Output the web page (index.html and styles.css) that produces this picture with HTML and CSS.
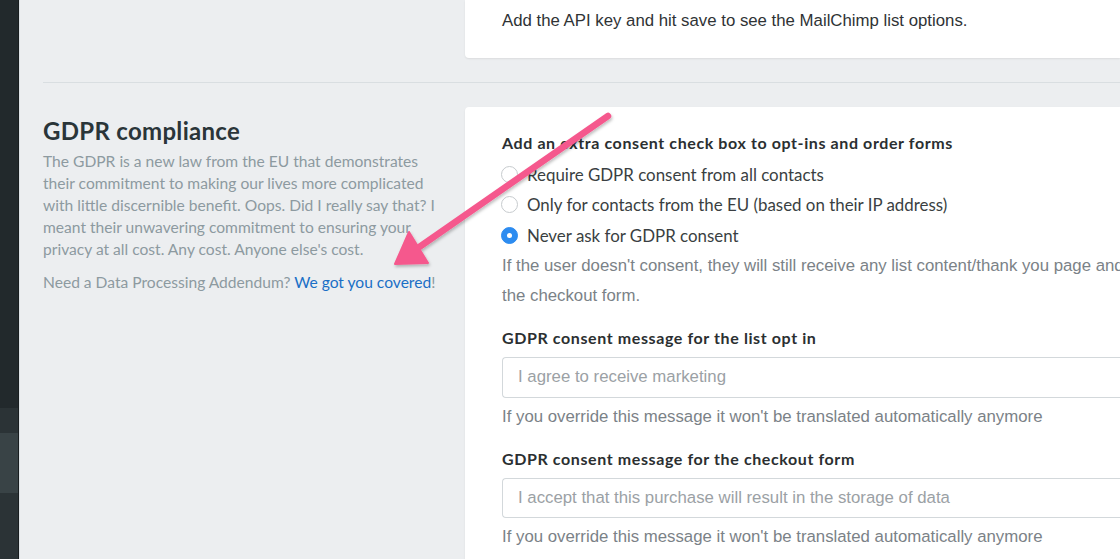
FILE: index.html
```html
<!DOCTYPE html>
<html>
<head>
<meta charset="utf-8">
<link rel="stylesheet" href="styles.css">
</head>
<body>
<div class="app">
  <aside class="sidebar">
    <div class="sb-top"></div>
    <div class="sb-item"></div>
    <div class="sb-item sb-active"></div>
    <div class="sb-rest"></div>
  </aside>
  <main class="main">
    <section class="row row-top">
      <div class="side"></div>
      <div class="card card-top">
        <p class="plain">Add the API key and hit save to see the MailChimp list options.</p>
      </div>
    </section>
    <hr class="divider">
    <section class="row">
      <div class="side side-text">
        <h2 class="title">GDPR compliance</h2>
        <p class="desc">The GDPR is a new law from the EU that demonstrates their commitment to making our lives more complicated with little discernible benefit. Oops. Did I really say that? I meant their unwavering commitment to ensuring your privacy at all cost. Any cost. Anyone else's cost.</p>
        <p class="desc desc-link">Need a Data Processing Addendum? <a class="link" href="#">We got you covered</a>!</p>
      </div>
      <div class="card card-form">
        <div class="label">Add an extra consent check box to opt-ins and order forms</div>
        <div class="radios">
          <label class="radio"><span class="dot"></span>Require GDPR consent from all contacts</label>
          <label class="radio"><span class="dot"></span>Only for contacts from the EU (based on their IP address)</label>
          <label class="radio"><span class="dot dot-on"></span>Never ask for GDPR consent</label>
        </div>
        <p class="help help-wide">If the user doesn't consent, they will still receive any list content/thank you page and the checkout form.</p>
        <div class="field">
          <div class="label">GDPR consent message for the list opt in</div>
          <div class="input">I agree to receive marketing</div>
          <p class="help">If you override this message it won't be translated automatically anymore</p>
        </div>
        <div class="field">
          <div class="label">GDPR consent message for the checkout form</div>
          <div class="input input-short">I accept that this purchase will result in the storage of data</div>
          <p class="help">If you override this message it won't be translated automatically anymore</p>
        </div>
      </div>
    </section>
  </main>
</div>
<svg class="arrow" width="1120" height="559" viewBox="0 0 1120 559">
  <defs>
    <filter id="sh" x="-20%" y="-20%" width="140%" height="140%">
      <feDropShadow dx="1" dy="2" stdDeviation="1.5" flood-color="#000" flood-opacity="0.25"/>
    </filter>
  </defs>
  <g filter="url(#sh)" fill="#f5598d" stroke="#f5598d">
    <line x1="608" y1="116" x2="415" y2="250" stroke-width="6.5" stroke-linecap="round"/>
    <polygon points="395,264 409,232 428,263" stroke-width="2" stroke-linejoin="round"/>
  </g>
</svg>
</body>
</html>
```
FILE: styles.css
```css
* { box-sizing: border-box; }
html, body { margin: 0; padding: 0; }
body {
  width: 1120px;
  height: 559px;
  overflow: hidden;
  background: #eceef0;
  font-family: "Lato", "Liberation Sans", sans-serif;
  position: relative;
}
.app {
  display: flex;
  height: 559px;
}
.sidebar {
  width: 19px;
  flex: none;
  display: flex;
  flex-direction: column;
  background: #22292c;
  border-right: 1px solid #191e20;
  box-shadow: 1px 0 0 #dde2e5;
}
.sb-top { height: 408px; background: #22292c; }
.sb-item { height: 25px; background: #2b3336; }
.sb-active { height: 60px; background: #394346; }
.sb-rest { flex: 1; background: #2b3336; }
.main {
  flex: 1;
  min-width: 0;
  padding-left: 23px;
  margin-left: 1px;
}
.row {
  display: flex;
}
.side {
  width: 422px;
  flex: none;
}
.card {
  flex: 1;
  min-width: 0;
  background: #fff;
  border-radius: 4px 0 0 4px;
  box-shadow: 0 1px 2px rgba(0, 0, 0, 0.08);
  padding-left: 37px;
  overflow: hidden;
}
.card-top {
  border-radius: 0 0 0 4px;
  padding-top: 10px;
  padding-bottom: 26px;
}
.plain {
  margin: 0;
  font-family: "Liberation Sans", sans-serif;
  font-size: 16.8px;
  line-height: 22px;
  color: #2f3335;
  white-space: nowrap;
}
.divider {
  border: 0;
  height: 1px;
  background: #d9dee1;
  margin: 24px 0 24px 0;
}
.side-text {
  padding-top: 9px;
  padding-right: 27px;
}
.title {
  margin: 0;
  font-size: 24px;
  line-height: 30px;
  font-weight: 700;
  letter-spacing: 0.3px;
  color: #2a3539;
}
.desc {
  margin: 4px 0 0 0;
  font-size: 15.6px;
  line-height: 22px;
  color: #8d9aa0;
}
.desc-link { margin-top: 11px; white-space: nowrap; }
.link { color: #1a6fc6; text-decoration: none; }
.card-form {
  padding-top: 25px;
  padding-bottom: 40px;
}
.label {
  font-size: 16px;
  letter-spacing: 0.6px;
  line-height: 22px;
  font-weight: 700;
  color: #2b2f31;
  white-space: nowrap;
}
.radios {
  margin-top: 5px;
  margin-left: -1px;
  display: flex;
  flex-direction: column;
}
.radio {
  height: 30.5px;
  display: flex;
  align-items: center;
  gap: 9px;
  font-size: 16.9px;
  color: #3a3f42;
  white-space: nowrap;
}
.dot {
  width: 17px;
  height: 17px;
  border-radius: 50%;
  border: 1px solid #c6cacd;
  background: #fff;
  flex: none;
  display: flex;
  align-items: center;
  justify-content: center;
}
.dot-on {
  background: #2d8cf0;
  border-color: #2d8cf0;
}
.dot-on::after {
  content: "";
  width: 5px;
  height: 5px;
  border-radius: 50%;
  background: #fff;
}
.help {
  margin: 8px 0 0 0;
  font-family: "Liberation Sans", sans-serif;
  font-size: 16.8px;
  line-height: 22px;
  color: #7b8287;
  white-space: nowrap;
}
.help-wide {
  margin-top: 0;
  line-height: 30px;
  width: 630px;
  white-space: normal;
}
.field { margin-top: 16px; }
.field + .field { margin-top: 20px; }
.input {
  margin-top: 8px;
  height: 41px;
  border: 1px solid #d3d8db;
  border-right: 0;
  border-radius: 4px 0 0 4px;
  padding-left: 15px;
  display: flex;
  align-items: center;
  font-family: "Liberation Sans", sans-serif;
  font-size: 16.8px;
  color: #9ba1a5;
  white-space: nowrap;
}
.input-short { height: 40px; }
.arrow {
  position: absolute;
  left: 0;
  top: 0;
  pointer-events: none;
}
```
